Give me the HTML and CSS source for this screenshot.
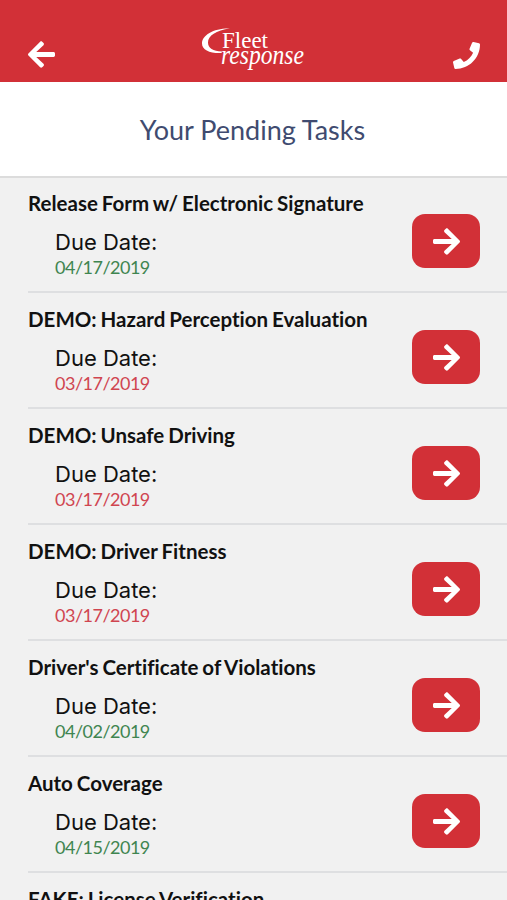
FILE: index.html
```html
<!DOCTYPE html>
<html lang="en">
<head>
    <meta charset="UTF-8">
    <meta name="viewport" content="width=device-width, initial-scale=1.0">
    <title>Your Pending Tasks</title>
    <link rel="stylesheet" href="styles.css">
</head>
<body>

    <!-- Shared icons -->
    <svg class="icon-defs" width="0" height="0">
        <symbol id="arrow" viewBox="0 0 448 512">
            <path d="M190.5 66.9l22.2-22.2c9.4-9.4 24.6-9.4 33.9 0L441 239c9.4 9.4 9.4 24.6 0 33.9L246.6 467.3c-9.4 9.4-24.6 9.4-33.9 0l-22.2-22.2c-9.5-9.5-9.3-25 .4-34.3L311.4 296H24c-13.3 0-24-10.7-24-24v-32c0-13.3 10.7-24 24-24h287.4L190.9 101.2c-9.8-9.3-10-24.8-.4-34.3z"/>
        </symbol>
        <symbol id="phone" viewBox="0 0 512 512">
            <path d="M493.4 24.6l-104-24c-11.3-2.6-22.9 3.3-27.5 13.9l-48 112c-4.2 9.8-1.4 21.3 6.9 28l60.6 49.6c-36 76.7-98.9 140.5-177.2 177.2l-49.6-60.6c-6.8-8.3-18.2-11.1-28-6.9l-112 48C3.9 366.5-2 378.1.6 389.4l24 104C27.1 504.2 36.7 512 48 512c256.1 0 464-207.5 464-464 0-11.2-7.7-20.9-18.6-23.4z"/>
        </symbol>
    </svg>

    <header class="header">
        <a class="header-back"><svg class="icon-arrow"><use href="#arrow"/></svg></a>
        <svg class="logo" viewBox="0 0 106 46">
            <path d="M29 1.500C13 1 1 8 1 16.500C1 23 9 26.500 20.500 26L21 24.500C12 24.500 7 21 7 15.500C7 9 15 3 29 1.500z"/>
            <text class="logo-top" x="21" y="20.500" textLength="46" lengthAdjust="spacingAndGlyphs">Fleet</text>
            <text class="logo-bottom" x="20" y="36.500" textLength="83" lengthAdjust="spacingAndGlyphs">response</text>
        </svg>
        <a class="header-call"><svg class="icon-phone"><use href="#phone"/></svg></a>
    </header>

    <div class="title-bar">
        <h1>Your Pending Tasks</h1>
    </div>

    <ul class="task-list">
        <li class="task">
            <div class="task-info">
                <h2>Release Form w/ Electronic Signature</h2>
                <p class="due-label">Due Date:</p>
                <p class="due-date green">04/17/2019</p>
            </div>
            <a class="task-button"><svg class="icon-arrow"><use href="#arrow"/></svg></a>
        </li>
        <li class="task">
            <div class="task-info">
                <h2>DEMO: Hazard Perception Evaluation</h2>
                <p class="due-label">Due Date:</p>
                <p class="due-date red">03/17/2019</p>
            </div>
            <a class="task-button"><svg class="icon-arrow"><use href="#arrow"/></svg></a>
        </li>
        <li class="task">
            <div class="task-info">
                <h2>DEMO: Unsafe Driving</h2>
                <p class="due-label">Due Date:</p>
                <p class="due-date red">03/17/2019</p>
            </div>
            <a class="task-button"><svg class="icon-arrow"><use href="#arrow"/></svg></a>
        </li>
        <li class="task">
            <div class="task-info">
                <h2>DEMO: Driver Fitness</h2>
                <p class="due-label">Due Date:</p>
                <p class="due-date red">03/17/2019</p>
            </div>
            <a class="task-button"><svg class="icon-arrow"><use href="#arrow"/></svg></a>
        </li>
        <li class="task">
            <div class="task-info">
                <h2>Driver's Certificate of Violations</h2>
                <p class="due-label">Due Date:</p>
                <p class="due-date green">04/02/2019</p>
            </div>
            <a class="task-button"><svg class="icon-arrow"><use href="#arrow"/></svg></a>
        </li>
        <li class="task">
            <div class="task-info">
                <h2>Auto Coverage</h2>
                <p class="due-label">Due Date:</p>
                <p class="due-date green">04/15/2019</p>
            </div>
            <a class="task-button"><svg class="icon-arrow"><use href="#arrow"/></svg></a>
        </li>
        <li class="task">
            <div class="task-info">
                <h2>FAKE: License Verification</h2>
            </div>
        </li>
    </ul>

</body>
</html>
```
FILE: styles.css
```css
* {
    box-sizing: border-box;
}
body {
    margin: 0;
    height: 900px;
    overflow: hidden;
    background-color: #f1f1f1;
    font-family: Lato, sans-serif;
    color: #111;
}
h1, h2, p, ul {
    margin: 0;
    padding: 0;
}
.icon-defs {
    display: none;
}
.icon-arrow {
    display: block;
    width: 27px;
    height: 31px;
    fill: #fff;
}
.icon-phone {
    display: block;
    width: 27px;
    height: 27px;
    fill: #fff;
}

/* Header */
.header {
    display: flex;
    justify-content: space-between;
    align-items: flex-start;
    height: 82px;
    padding: 27px 27px 0 28px;
    background-color: #d23037;
}
.header-back {
    margin-top: 12px;
    transform: scaleX(-1);
}
.header-call {
    margin-top: 15px;
}
.logo {
    width: 106px;
    height: 46px;
    fill: #fff;
}
.logo-top {
    font-family: "Liberation Serif", serif;
    font-size: 24px;
}
.logo-bottom {
    font-family: "Liberation Serif", serif;
    font-size: 28px;
    font-style: italic;
}

.title-bar {
    height: 96px;
    padding: 31px 2px 0 0;
    background-color: #fff;
    border-bottom: 2px solid #dcdcdc;
    text-align: center;
}
.title-bar h1 {
    font-size: 27px;
    line-height: 34px;
    font-weight: normal;
    color: #404b70;
}

/* Task rows */
.task-list {
    list-style: none;
    padding-left: 28px;
}
.task {
    display: flex;
    justify-content: space-between;
    height: 116px;
    padding: 12px 27px 0 0;
    border-bottom: 2px solid #dedfe1;
}
.task:first-child {
    height: 115px;
    padding-top: 11px;
}
.task h2 {
    font-size: 20.5px;
    line-height: 28px;
    font-weight: bold;
    word-spacing: -1px;
    font-variant-ligatures: none;
}
.due-label {
    margin: 11px 0 0 27px;
    font-family: Inter, sans-serif;
    font-size: 22px;
    line-height: 28px;
}
.due-date {
    margin-left: 27px;
    font-size: 18px;
    line-height: 22px;
    letter-spacing: -0.5px;
}
.due-date.green { color: #3f8550; }
.due-date.red { color: #d04550; }
.task-button {
    display: flex;
    justify-content: center;
    align-items: center;
    width: 68px;
    height: 54px;
    margin-top: 25px;
    border-radius: 13px;
    background-color: #d23037;
}
```
